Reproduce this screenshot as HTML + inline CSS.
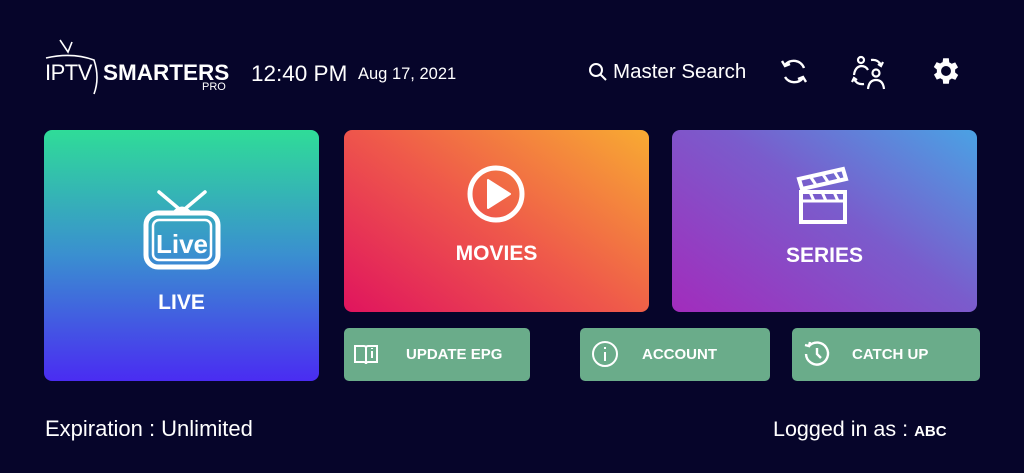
<!DOCTYPE html>
<html><head><meta charset="utf-8"><style>
*{margin:0;padding:0;box-sizing:border-box}
body{width:1024px;height:473px;background:#06052a;font-family:"Liberation Sans",sans-serif;color:#fff;position:relative;overflow:hidden}
.a{position:absolute}
.card{position:absolute;border-radius:8px}
.lbl{position:absolute;font-weight:bold;font-size:21px;text-align:center;width:100%}
.btn{position:absolute;top:328px;height:53px;background:#6aac8a;border-radius:5px}
.btn span{position:absolute;top:18px;font-weight:bold;font-size:15px;color:#fff}
</style></head><body>
<div class="a" style="left:45px;top:60px;font-size:22px;letter-spacing:-0.5px">IPTV</div>
<svg class="a" style="left:42px;top:38px" width="60" height="60" viewBox="0 0 60 60" fill="none" stroke="#fff" stroke-width="1.6">
<path d="M18 2 L26 14 L30 4"/><path d="M4 20 Q30 14 52 22 Q58 40 52 56"/>
</svg>
<div class="a" style="left:103px;top:60px;font-size:22.5px;font-weight:bold">SMARTERS</div>
<div class="a" style="left:202px;top:81px;font-size:11px">PRO</div>
<div class="a" style="left:251px;top:61px;font-size:22.5px">12:40 PM</div>
<div class="a" style="left:358px;top:65px;font-size:16.5px">Aug 17, 2021</div>
<svg class="a" style="left:588px;top:62px" width="20" height="20" viewBox="0 0 20 20" fill="none" stroke="#fff" stroke-width="2"><circle cx="8" cy="8" r="6"/><path d="M12.5 12.5 L18 18"/></svg>
<div class="a" style="left:613px;top:60px;font-size:20.5px">Master Search</div>
<svg class="a" style="left:778px;top:56px" width="32" height="32" viewBox="0 0 32 32" fill="none" stroke="#fff" stroke-width="2.4"><path d="M7 9 A11 11 0 0 1 26 12"/><path d="M4 5 L7 10 L12 8"/><path d="M25 22 A11 11 0 0 1 7 21"/><path d="M28 26 L25 21 L20 23"/></svg>
<svg class="a" style="left:850px;top:53px" width="38" height="38" viewBox="0 0 38 38" fill="none" stroke="#fff" stroke-width="2.2"><circle cx="11" cy="7" r="3"/><path d="M4 22 Q5 14 11 13 Q16 13 18 17"/><circle cx="26" cy="20" r="3.5"/><path d="M18 36 Q19 27 26 27 Q33 27 34 36"/><path d="M21 7 Q28 6 31 12"/><path d="M28 11 L31 13 L33 9"/><path d="M14 31 Q7 32 4 26"/><path d="M7 27 L4 25 L2 29"/></svg>
<svg class="a" style="left:929px;top:54px" width="34" height="34" viewBox="0 0 24 24" fill="#fff"><path d="M19.4 13a7.5 7.5 0 0 0 0-2l2.1-1.6-2-3.5-2.5 1a7 7 0 0 0-1.7-1L15 3h-4l-.4 2.7a7 7 0 0 0-1.7 1l-2.5-1-2 3.5L6.6 11a7.5 7.5 0 0 0 0 2l-2.1 1.6 2 3.5 2.5-1a7 7 0 0 0 1.7 1L11 21h4l.4-2.7a7 7 0 0 0 1.7-1l2.5 1 2-3.5zM13 15.5a3.5 3.5 0 1 1 0-7 3.5 3.5 0 0 1 0 7z" transform="translate(-1 0)"/></svg>
<div class="card" style="left:44px;top:130px;width:275px;height:251px;background:linear-gradient(180deg,#2fdc98 0%,#3a8fd0 50%,#4a2cf2 100%)">
<svg class="a" style="left:98px;top:58px" width="80" height="82" viewBox="0 0 80 82" fill="none" stroke="#fff"><path d="M17 4 L36 20 M63 4 L44 20" stroke-width="3.5" stroke-linecap="round"/><path d="M31 24 Q40 14 49 24 Z" fill="#fff"/><rect x="4" y="25" width="72" height="54" rx="12" stroke-width="5"/><rect x="11" y="32" width="58" height="40" rx="6" stroke-width="2.5"/><text x="40" y="65" fill="#fff" stroke="none" font-family="Liberation Sans" font-weight="bold" font-size="26" text-anchor="middle">Live</text></svg>
<div class="lbl" style="top:161px">LIVE</div></div>
<div class="card" style="left:344px;top:130px;width:305px;height:182px;background:linear-gradient(35deg,#e0145e 0%,#ef5a4a 50%,#f8ab32 100%)">
<svg class="a" style="left:122px;top:34px" width="60" height="60" viewBox="0 0 60 60" fill="none" stroke="#fff" stroke-width="5"><circle cx="30" cy="30" r="26"/><path d="M22 16 L44 30 L22 44 Z" fill="#fff" stroke-width="2" stroke-linejoin="round"/></svg>
<div class="lbl" style="top:112px">MOVIES</div></div>
<div class="card" style="left:672px;top:130px;width:305px;height:182px;background:linear-gradient(35deg,#a22cbc 0%,#7a5ccc 55%,#4aa2e4 100%)">
<svg class="a" style="left:122px;top:35px" width="58" height="60" viewBox="0 0 58 60" fill="none" stroke="#fff" stroke-width="4"><path d="M5 14 L49 4 L52 14 L8 24 Z"/><path d="M16 11 L22 20 M28 8 L34 17 M40 6 L45 14" stroke-width="3"/><rect x="7" y="27" width="44" height="30"/><path d="M7 36 H51 M16 27 L20 36 M28 27 L32 36 M40 27 L44 36" stroke-width="3"/></svg>
<div class="lbl" style="top:114px">SERIES</div></div>
<div class="btn" style="left:344px;width:186px"><svg class="a" style="left:9px;top:14px" width="26" height="24" viewBox="0 0 26 24" fill="none" stroke="#fff" stroke-width="2"><path d="M2 4 H11 Q13 4 13 6 V22 Q13 20 11 20 H2 Z M24 4 H15 Q13 4 13 6 V22 Q13 20 15 20 H24 Z"/><path d="M19 9 V16 M19 6 V7"/></svg><span style="left:62px">UPDATE EPG</span></div>
<div class="btn" style="left:580px;width:190px"><svg class="a" style="left:11px;top:12px" width="28" height="28" viewBox="0 0 28 28" fill="none" stroke="#fff" stroke-width="2"><circle cx="14" cy="14" r="12"/><path d="M14 12 V21 M14 7 V9"/></svg><span style="left:62px">ACCOUNT</span></div>
<div class="btn" style="left:792px;width:188px"><svg class="a" style="left:11px;top:12px" width="28" height="28" viewBox="0 0 28 28" fill="none" stroke="#fff" stroke-width="2.4"><path d="M6 6 A11 11 0 1 1 3 14"/><path d="M2 5 L6 6 L7 2"/><path d="M14 8 V14 L18 18"/></svg><span style="left:60px">CATCH UP</span></div>
<div class="a" style="left:45px;top:416px;font-size:22px">Expiration : Unlimited</div>
<div class="a" style="left:773px;top:417px;font-size:21.5px">Logged in as : <span style="font-size:15px;font-weight:bold">ABC</span></div>
</body></html>
